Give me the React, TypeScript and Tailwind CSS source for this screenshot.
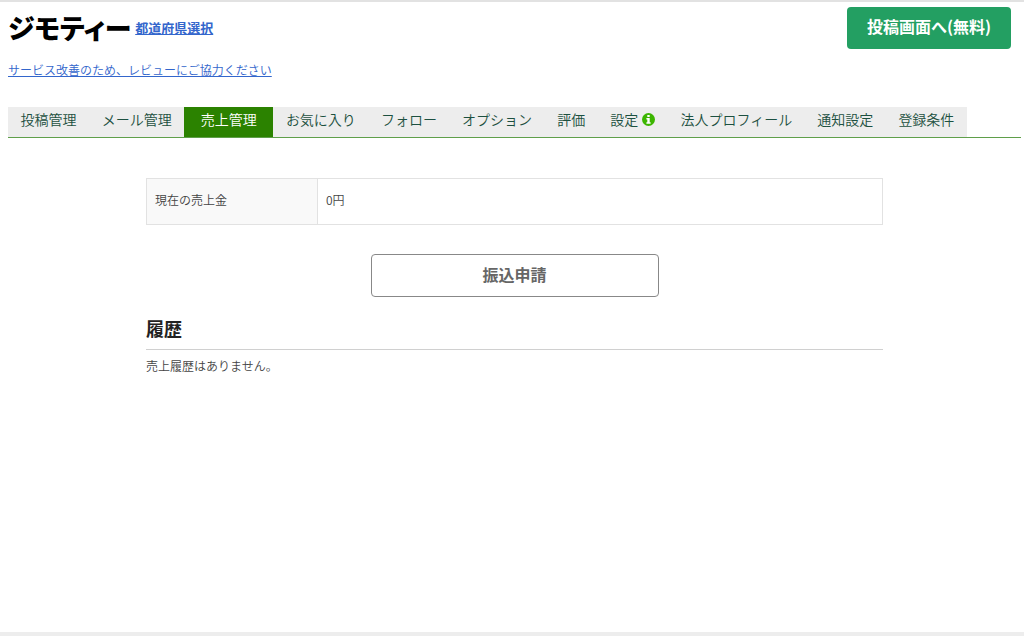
import React from 'react'

type Tab = { label: string; info?: boolean; active?: boolean }

const tabs: Tab[] = [
  { label: '投稿管理' },
  { label: 'メール管理' },
  { label: '売上管理', active: true },
  { label: 'お気に入り' },
  { label: 'フォロー' },
  { label: 'オプション' },
  { label: '評価' },
  { label: '設定', info: true },
  { label: '法人プロフィール' },
  { label: '通知設定' },
  { label: '登録条件' },
]

function InfoIcon() {
  return (
    <svg viewBox="0 0 13 13" className="w-[13px] h-[13px]" aria-hidden="true">
      <circle cx="6.5" cy="6.5" r="6.5" fill="#3cb500" />
      <path d="M5.3 2h2.4v2H5.3zM4.4 5h3.3v4.2h.9v1.6H4.4V9.2h.9V6.6h-.9z" fill="#fff" />
    </svg>
  )
}

function Header() {
  return (
    <header className="flex items-start justify-between pl-2 pr-[13px] pt-[5px]">
      <div>
        <div className="flex items-center gap-1 h-[42px]">
          <a href="#" className="text-[27px] leading-10 font-black text-black [font-feature-settings:'palt']">ジモティー</a>
          <a href="#" className="text-[13px] font-bold text-[#3366cc] underline">都道府県選択</a>
        </div>
        <a href="#" className="block mt-[11px] text-xs leading-5 text-[#3366cc] underline">
          サービス改善のため、レビューにご協力ください
        </a>
      </div>
      <button type="button" className="h-[42px] px-5 pb-1 rounded bg-[#239f62] text-white text-base font-bold">
        投稿画面へ(無料)
      </button>
    </header>
  )
}

function TabNav() {
  return (
    <nav className="mt-[27px] border-b border-[#5f9f4a]">
      <ul className="flex w-full max-w-[959px] bg-[#ededed]">
        {tabs.map((tab) => (
          <li key={tab.label} className="grow">
            <a
              href="#"
              className={
                tab.active
                  ? 'flex items-center justify-center h-[30px] px-4 pb-[6px] text-sm whitespace-nowrap bg-[#2b8200] text-white'
                  : 'flex items-center justify-center gap-1 h-[30px] px-3 pb-[6px] text-sm whitespace-nowrap text-[#1c5040]'
              }
            >
              {tab.label}
              {tab.info && <InfoIcon />}
            </a>
          </li>
        ))}
      </ul>
    </nav>
  )
}

export default function App() {
  return (
    <div className="min-h-screen flex flex-col bg-white border-t-2 border-[#e2e2e2] font-['Noto_Sans_CJK_JP',sans-serif] font-[350] text-[#444]">
      <Header />

      <div className="pl-2 pr-[3px]">
        <TabNav />

        <main className="w-full max-w-[737px] mx-auto mt-10">
          <table className="w-full border-collapse text-xs">
            <tbody>
              <tr className="h-[46px]">
                <th scope="row" className="w-[171px] px-2 pb-1 text-left font-[350] bg-[#f9f9f9] border border-[#e2e2e2]">現在の売上金</th>
                <td className="px-2 pb-1 border border-[#e2e2e2]">0円</td>
              </tr>
            </tbody>
          </table>

          <button type="button" className="block w-72 h-[43px] pb-1 mx-auto mt-[29px] border border-[#888] rounded bg-white text-base font-bold text-[#666]">
            振込申請
          </button>

          <h2 className="mt-4 pb-[6px] text-lg leading-[30px] font-bold text-[#222] border-b border-[#d0d0d0]">履歴</h2>
          <p className="mt-[6px] text-xs leading-5">売上履歴はありません。</p>
        </main>
      </div>

      <footer className="mt-auto h-1 bg-[#ededed]" />
    </div>
  )
}
